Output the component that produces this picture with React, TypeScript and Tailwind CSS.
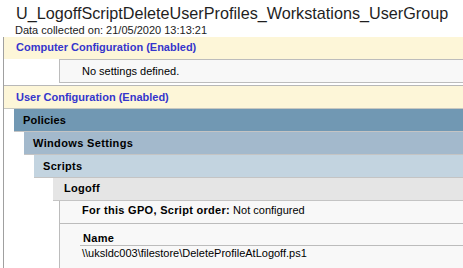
export default function App() {
    return (
        <div className="w-[463px] h-[268px] overflow-hidden bg-white text-black font-['Liberation_Sans',Arial,sans-serif]">
            {/* report title */}
            <div className="pl-4 pt-[3px] text-[16.2px] leading-5 text-[#1f1f1f] whitespace-nowrap">
                U_LogoffScriptDeleteUserProfiles_Workstations_UserGroup
            </div>
            <div className="pl-[15px] text-[11px] leading-[14px] text-[#222]">
                Data collected on: 21/05/2020 13:13:21
            </div>

            <div className="ml-[3px] border-l border-[#a0a0a0] text-[11px]">
                {/* computer section */}
                <div className="h-[22px] bg-[#fdf6d8] pl-3 leading-[20px] font-bold text-[#3535cc]">
                    Computer Configuration (Enabled)
                </div>
                <div className="pl-[55px]">
                    <div className="h-[24px] border-t border-l border-b border-[#bcbcbc] bg-[#f8f8f8] pl-[22px] leading-[22px]">
                        No settings defined.
                    </div>
                </div>
                <div className="h-[2px]" />

                {/* user section */}
                <div className="h-[24px] border-t border-b border-t-[#b8b8b8] border-b-[#c8c8c0] bg-[#fdf6d8] pl-3 leading-[22px] font-bold text-[#3535cc]">
                    User Configuration (Enabled)
                </div>
                <div className="ml-[10px] h-[23px] border-b border-[#c4c4c4] bg-[#7198b3] pl-[9px] leading-[22px] font-bold tracking-[0.2px]">
                    Policies
                </div>
                <div className="ml-[20px] h-[23px] border-b border-[#c4c4c4] bg-[#a3b9cc] pl-[9px] leading-[22px] font-bold tracking-[0.35px]">
                    Windows Settings
                </div>
                <div className="ml-[30px] h-[23px] border-b border-[#c4c4c4] bg-[#c3d4e0] pl-[9px] leading-[22px] font-bold tracking-[0.3px]">
                    Scripts
                </div>
                <div className="ml-[49px] h-[23px] border-b border-[#c4c4c4] bg-[#e5e5e5] pl-[11px] leading-[20px] font-bold tracking-[0.3px]">
                    Logoff
                </div>

                {/* logoff details */}
                <div className="ml-[55px] h-[23px] border-l border-b border-[#bcbcbc] bg-[#f8f8f8] pl-[22px] pt-[2px] leading-[14px]">
                    <span className="font-bold tracking-[0.3px]">For this GPO, Script order:</span> Not configured
                </div>
                <div className="ml-[55px] h-[60px] border-l border-[#bcbcbc] bg-[#f8f8f8] pl-[20px]">
                    <div className="h-[22px] border-b border-[#bcbcbc] pl-[3px] pt-[7px] leading-[14px] font-bold tracking-[0.3px]">
                        Name
                    </div>
                    <div className="pl-[2px] leading-[14px]">
                        \\uksldc003\filestore\DeleteProfileAtLogoff.ps1
                    </div>
                </div>
            </div>
        </div>
    )
}
